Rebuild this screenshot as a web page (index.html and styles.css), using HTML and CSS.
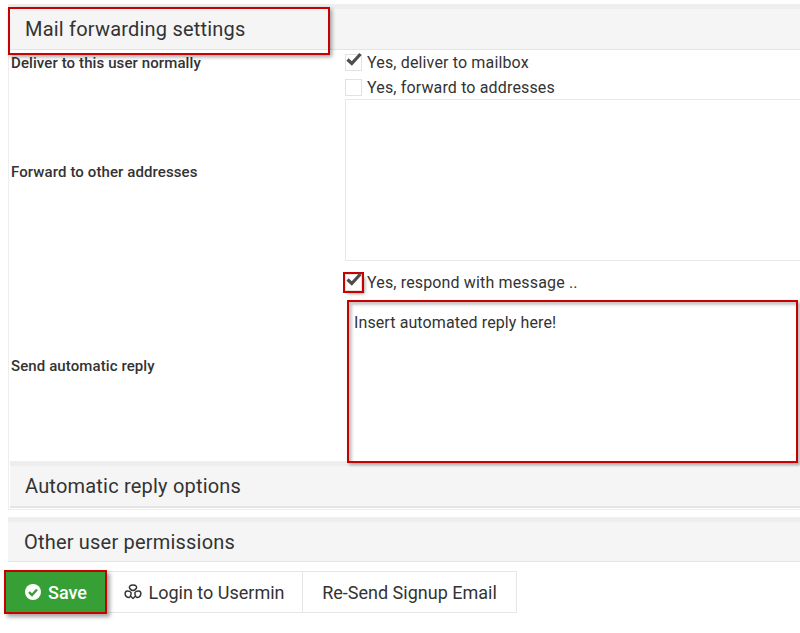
FILE: index.html
```html
<!DOCTYPE html>
<html lang="en">
<head>
<meta charset="utf-8">
<title>Mail forwarding settings</title>
<link rel="stylesheet" href="styles.css">
</head>
<body>
<section class="panel">
  <header class="head head-main"><h2 class="title title-marked">Mail forwarding settings</h2></header>
  <div class="row row-deliver">
    <div class="label">Deliver to this user normally</div>
    <div class="field">
      <div class="check-line"><span class="box"><svg class="tick" viewBox="0 0 16 14"><path d="M1.5 7.5 5.8 11.5 14.5 2"/></svg></span>Yes, deliver to mailbox</div>
    </div>
  </div>
  <div class="row row-forward">
    <div class="label">Forward to other addresses</div>
    <div class="field">
      <div class="check-line"><span class="box"></span>Yes, forward to addresses</div>
      <div class="area"></div>
    </div>
  </div>
  <div class="row row-reply">
    <div class="label">Send automatic reply</div>
    <div class="field">
      <div class="check-line check-reply"><span class="box box-marked"><svg class="tick" viewBox="0 0 16 14"><path d="M1.5 7.5 5.8 11.5 14.5 2"/></svg></span>Yes, respond with message ..</div>
      <div class="area area-marked">Insert automated reply here!</div>
    </div>
  </div>
  <header class="head head-sub"><h2 class="title">Automatic reply options</h2></header>
</section>
<section class="panel-plain">
  <header class="head head-other"><h2 class="title">Other user permissions</h2></header>
</section>
<footer class="actions">
  <button class="btn btn-save" type="button"><svg class="ico-save" viewBox="0 0 18 18"><circle cx="9" cy="9" r="8" fill="#fff"/><path d="M5 9.2 8 12 13 6.5" fill="none" stroke="#369f35" stroke-width="2.4"/></svg>Save</button>
  <button class="btn" type="button"><svg class="ico-login" viewBox="0 0 18 16"><path d="M9 6.6C8 6.6 6.6 5.6 5.6 4.2 5 3 5.6 1 9 1s4 2 3.4 3.2C11.4 5.6 10 6.6 9 6.6ZM7 8.5C6.6 7.8 5 7 3.4 7 1.8 7 .8 8.6 1.2 10.4 1.6 12.4 3.4 13.6 5 13.6 6.4 13.4 7.4 10 7 8.5ZM11 8.5C11.4 7.8 13 7 14.6 7 16.2 7 17.2 8.6 16.800 10.400 16.400 12.400 14.600 13.600 13 13.600 11.600 13.400 10.600 10 11 8.500ZM7.200 12.400C8 13.800 8.400 14.400 9 14.400S10 13.800 10.800 12.400" fill="none" stroke="#333" stroke-width="1.500"/></svg>Login to Usermin</button>
  <button class="btn" type="button">Re-Send Signup Email</button>
</footer>
</body>
</html>
```
FILE: styles.css
```css
* { box-sizing: border-box; }
html, body { margin: 0; padding: 0; }
body {
  width: 800px;
  height: 633px;
  overflow: hidden;
  padding-top: 4px;
  background: #fff;
  color: #333;
  font-family: Roboto, "Liberation Sans", sans-serif;
  font-size: 16px;
}
.panel {
  margin-left: 8px;
  height: 506px;
  border-left: 1px solid #eee;
  border-bottom: 1px solid #eee;
}
.panel-plain { margin: 7px 0 0 8px; }
.head {
  height: 46px;
  background: #f5f5f5;
  border-top: 5px solid #eeeeee;
  border-bottom: 1px solid #e4e4e4;
  display: flex;
  align-items: center;
}
.head-main { position: relative; margin-left: -1px; padding-left: 17px; }
.head-sub { height: 47px; margin: 0 0 0 1px; padding-left: 15px; border-bottom-width: 2px; }
.head-other { height: 45px; padding-left: 16px; }
.title { margin: 0; font-size: 20px; font-weight: 400; letter-spacing: 0.2px; line-height: 26px; }
.title-marked::after {
  content: "";
  position: absolute;
  left: 0;
  top: -2px;
  width: 318px;
  height: 44px;
  border: 2px solid #c80000;
  box-shadow: 2px 2px 4px rgba(0, 0, 0, 0.35);
}
.row { display: grid; grid-template-columns: 336px 464px; align-items: center; }
.row-deliver { height: 25px; }
.row-forward { height: 194px; }
.row-reply { height: 192px; }
.label { padding-left: 2px; font-size: 15px; font-weight: 500; color: #333; letter-spacing: 0.1px; }
.field { align-self: start; }
.row-deliver .field, .row-forward .field { padding-top: 4px; }
.check-line { display: flex; align-items: center; height: 16px; font-size: 16px; letter-spacing: 0.15px; white-space: nowrap; }
.box {
  position: relative;
  flex: none;
  width: 17px;
  height: 17px;
  margin-right: 5px;
  border: 1px solid #e2e2e2;
  background: #fff;
}
.tick { position: absolute; left: 0; top: -3px; width: 16px; height: 14px; }
.tick path { fill: none; stroke: #4d4d4d; stroke-width: 3.200; }
.area {
  margin-top: 4px;
  height: 162px;
  width: 470px;
  border: 1px solid #e8e8e8;
  background: #fff;
}
.check-reply { height: 19px; padding-top: 5px; margin-top: 1px; }
.box-marked { outline: 2px solid #c80000; outline-offset: 0; box-shadow: 3px 3px 3px rgba(0, 0, 0, 0.35); }
.area-marked {
  margin: 11px 0 0 2px;
  width: 451px;
  height: 163px;
  padding: 9px 5px;
  border: 2px solid #c80000;
  box-shadow: inset 3px 3px 3px rgba(0, 0, 0, 0.22), 2px 2px 3px rgba(0, 0, 0, 0.3);
  font-size: 16px;
  letter-spacing: 0.1px;
  line-height: 24px;
}
.actions { display: flex; align-items: center; margin: 8px 0 0 4px; }
.btn {
  display: flex;
  align-items: center;
  justify-content: center;
  height: 42px;
  background: #fff;
  border: 1px solid #e6e6e6;
  border-left: 0;
  color: #333;
  font: 400 18px Roboto, "Liberation Sans", sans-serif;
  padding: 0;
  width: 196px;
}
.btn + .btn + .btn { width: 214px; }
.btn-save {
  width: 103px;
  height: 44px;
  background: #369f35;
  border: 2px solid #c80000;
  color: #fff;
  font-weight: 500;
  box-shadow: 3px 3px 4px rgba(0, 0, 0, 0.35);
  position: relative;
}
.ico-save { width: 18px; height: 18px; margin-right: 6px; }
.ico-login { width: 18px; height: 16px; margin-right: 6px; }
```
